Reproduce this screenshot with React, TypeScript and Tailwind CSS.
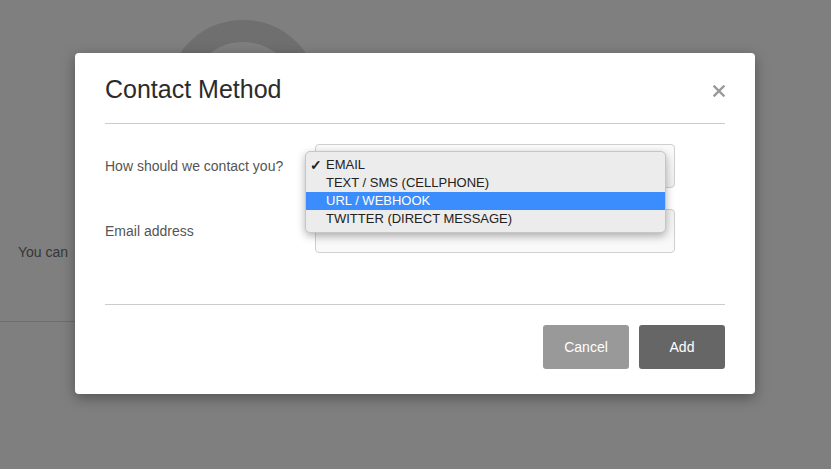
import React from 'react';

const options = [
  { label: 'EMAIL', checked: true },
  { label: 'TEXT / SMS (CELLPHONE)' },
  { label: 'URL / WEBHOOK', active: true },
  { label: 'TWITTER (DIRECT MESSAGE)' },
];

function CloseIcon() {
  return (
    <svg width="12" height="12" viewBox="0 0 12 12" className="block">
      <path d="M1.5 1.5L10.5 10.5M10.5 1.5L1.5 10.5" stroke="#999" strokeWidth="2.4" strokeLinecap="square" />
    </svg>
  );
}

export default function App() {
  return (
    <div
      className="relative w-[831px] h-[469px] overflow-hidden bg-[#7f7f7f]"
      style={{ fontFamily: '"Liberation Sans", Arial, sans-serif' }}
    >
      {/* page behind the overlay */}
      <div className="flex flex-col">
        <div className="ml-[167px] mt-[20px] w-[152px] h-[152px] rounded-full border-[22px] border-[#6f6f6f]" />
        <p className="ml-[18px] mt-[70px] text-[14px] leading-[20px] text-[#363636]">You can</p>
        <div className="mt-[59px] w-[320px] h-px bg-[#6e6e6e]" />
      </div>

      {/* modal */}
      <div className="absolute left-[75px] top-[53px] w-[680px] h-[341px] bg-white rounded-[4px] shadow-[0_4px_14px_rgba(0,0,0,0.35)] px-[30px] flex flex-col">
        <div className="flex items-center justify-between pt-[22px] pb-[20px] border-b border-[#cccccc]">
          <h2 className="text-[25px] leading-[28px] text-[#2b2b2b]">Contact Method</h2>
          <button className="mt-[4px]">
            <CloseIcon />
          </button>
        </div>

        <div className="flex flex-col gap-[21px] pt-[20px] pb-[51px] border-b border-[#cccccc]">
          <div className="flex items-center">
            <label className="w-[210px] text-[14px] text-[#555]">How should we contact you?</label>
            <div className="relative w-[360px] h-[44px] rounded-[4px] border border-[#cfcfcf] bg-gradient-to-b from-[#fbfbfb] to-[#eeeeee]">
              <span className="absolute right-[9px] top-[14px] text-[8px] leading-[8px] text-[#333] flex flex-col">
                <span>▴</span>
                <span>▾</span>
              </span>
              <div className="absolute left-[-11px] top-[6px] w-[361px] rounded-[5px] border border-[#c6c6c6] bg-[#ececec] py-[4px] shadow-[0_3px_9px_rgba(0,0,0,0.3)] z-10">
                {options.map((o) => (
                  <div
                    key={o.label}
                    className={
                      'flex items-center h-[18px] text-[13px] ' +
                      (o.active ? 'bg-[#3b8cfd] text-white' : 'text-[#222]')
                    }
                  >
                    <span className="w-[20px] pl-[4px] text-[14px] leading-[14px] font-bold">{o.checked ? '✓' : ''}</span>
                    <span>{o.label}</span>
                  </div>
                ))}
              </div>
            </div>
          </div>
          <div className="flex items-center">
            <label className="w-[210px] text-[14px] text-[#555]">Email address</label>
            <div className="w-[360px] h-[44px] rounded-[4px] border border-[#cfcfcf] bg-gradient-to-b from-[#f2f2f2] to-[#fafafa]" />
          </div>
        </div>

        <div className="flex justify-end gap-[10px] pt-[20px]">
          <button className="w-[86px] h-[44px] rounded-[3px] bg-[#999999] text-white text-[14px]">Cancel</button>
          <button className="w-[86px] h-[44px] rounded-[3px] bg-[#666666] text-white text-[14px]">Add</button>
        </div>
      </div>
    </div>
  );
}
